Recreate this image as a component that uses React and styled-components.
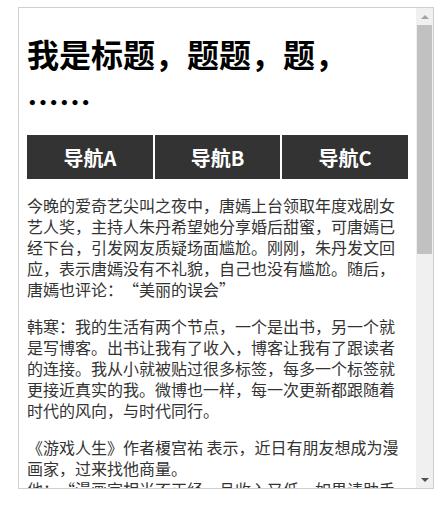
import React from "react";
import styled, { createGlobalStyle } from "styled-components";

const Global = createGlobalStyle`
  html, body { margin: 0; padding: 0; background: #fff; }
  body { font-family: "Noto Sans CJK SC", "Noto Sans", sans-serif; }
`;

const Page = styled.div`
  padding: 7px 0 0 18px;
`;

const Frame = styled.div`
  box-sizing: border-box;
  width: 416px;
  height: 482px;
  border: 1px solid #cfcfcf;
  display: flex;
  background: #fff;
`;

const Content = styled.div`
  flex: 1;
  min-width: 0;
  overflow: hidden;
  padding: 0 8px;
`;

const Title = styled.h1`
  margin: 21px 0 10px;
  font-size: 32px;
  line-height: 48px;
  font-weight: 700;
  color: #000;
`;

const Nav = styled.nav`
  display: grid;
  grid-template-columns: repeat(3, 1fr);
  gap: 2px;
  height: 44px;
  margin-bottom: 2px;
`;

const NavItem = styled.a`
  display: flex;
  align-items: center;
  justify-content: center;
  background: #333;
  color: #fff;
  font-size: 20px;
  font-weight: 700;
  text-decoration: none;
`;

const Para = styled.p`
  margin: 16px 0;
  font-size: 16px;
  line-height: 21px;
  color: #333;
`;

const Quote = styled.span`
  display: inline-block;
  width: 1em;
  text-align: ${(p) => (p.$close ? "left" : "right")};
`;

const Scrollbar = styled.div`
  width: 17px;
  flex: none;
  background: #f0f0f0;
  display: flex;
  flex-direction: column;
`;

const ArrowButton = styled.div`
  height: 17px;
  flex: none;
  display: flex;
  align-items: center;
  justify-content: center;
  &::before {
    content: "";
    width: 0;
    height: 0;
    border-left: 4px solid transparent;
    border-right: 4px solid transparent;
    ${(p) =>
      p.$dir === "up"
        ? `border-bottom: 4px solid ${p.$color};`
        : `border-top: 4px solid ${p.$color};`}
  }
`;

const Track = styled.div`
  flex: 1;
  display: flex;
  flex-direction: column;
  padding: 0 1px;
`;

const Thumb = styled.div`
  height: 229px;
  background: #c1c1c1;
`;

export default function App() {
  return (
    <>
      <Global />
      <Page lang="zh-CN">
        <Frame>
          <Content>
            <Title>
              我是标题，题题，题，
              <br />
              ……
            </Title>
            <Nav>
              <NavItem>导航A</NavItem>
              <NavItem>导航B</NavItem>
              <NavItem>导航C</NavItem>
            </Nav>
            <Para>
              今晚的爱奇艺尖叫之夜中，唐嫣上台领取年度戏剧女艺人奖，主持人朱丹希望她分享婚后甜蜜，可唐嫣已经下台，引发网友质疑场面尴尬。刚刚，朱丹发文回应，表示唐嫣没有不礼貌，自己也没有尴尬。随后，唐嫣也评论：
              <Quote>“</Quote>美丽的误会<Quote $close>”</Quote>
            </Para>
            <Para>
              韩寒：我的生活有两个节点，一个是出书，另一个就是写博客。出书让我有了收入，博客让我有了跟读者的连接。我从小就被贴过很多标签，每多一个标签就更接近真实的我。微博也一样，每一次更新都跟随着时代的风向，与时代同行。
            </Para>
            <Para>
              《游戏人生》作者榎宫祐 表示，近日有朋友想成为漫画家，过来找他商量。
              <br />
              他：<Quote>“</Quote>漫画家相当不正经，且收入又低，如果请助手的话还要自己出钱。<Quote $close>”</Quote>
            </Para>
          </Content>
          <Scrollbar>
            <ArrowButton $dir="up" $color="#a3a3a3" />
            <Track>
              <Thumb />
            </Track>
            <ArrowButton $dir="down" $color="#505050" />
          </Scrollbar>
        </Frame>
      </Page>
    </>
  );
}
